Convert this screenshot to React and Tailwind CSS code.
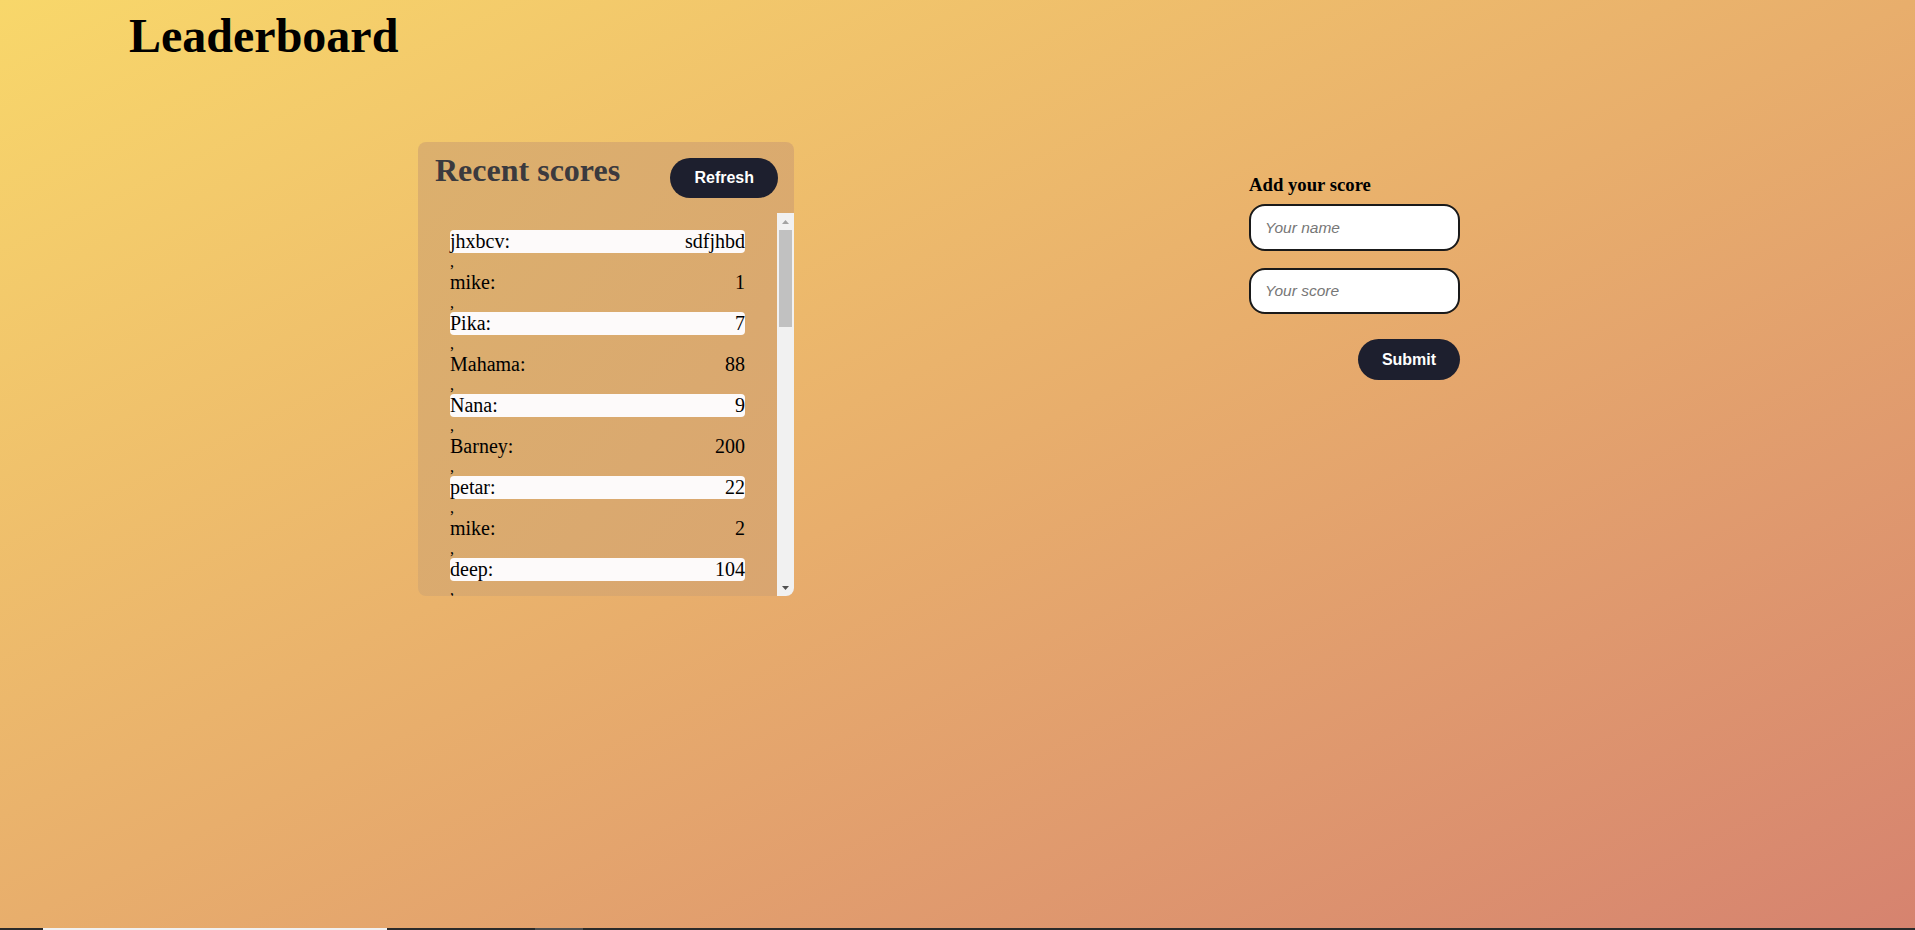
import React from 'react';

const scores = [
  { user: 'jhxbcv', score: 'sdfjhbd' },
  { user: 'mike', score: '1' },
  { user: 'Pika', score: '7' },
  { user: 'Mahama', score: '88' },
  { user: 'Nana', score: '9' },
  { user: 'Barney', score: '200' },
  { user: 'petar', score: '22' },
  { user: 'mike', score: '2' },
  { user: 'deep', score: '104' },
  { user: 'Kwame', score: '45' },
  { user: 'lisa', score: '12' },
  { user: 'Tom', score: '300' },
];

const serif = "font-['Liberation_Serif','Times_New_Roman',serif]";
const sans = "font-['Liberation_Sans',Arial,sans-serif]";

const Scrollbar = () => (
  <div className="w-[17px] shrink-0 bg-[#f1f1f1] flex flex-col">
    <div className="h-[17px] flex items-center justify-center">
      <svg width="7" height="4" viewBox="0 0 7 4">
        <path d="M0 4 L3.5 0 L7 4 Z" fill="#a3a3a3" />
      </svg>
    </div>
    <div className="mx-[2px] h-[97px] bg-[#c1c1c1]" />
    <div className="flex-1" />
    <div className="h-[17px] flex items-center justify-center">
      <svg width="7" height="4" viewBox="0 0 7 4">
        <path d="M0 0 L7 0 L3.5 4 Z" fill="#505050" />
      </svg>
    </div>
  </div>
);

const RecentScores = () => (
  <div className="w-[376px] h-[454px] shrink-0 rounded-lg bg-linear-to-br from-[#dcb06d] to-[#d9a570] flex flex-col overflow-hidden">
    <div className="flex justify-between items-start pl-[17px] pr-4 pt-[10px]">
      <h2 className={`${serif} text-[32px] font-bold leading-[normal] text-[#3b3a3e]`}>Recent scores</h2>
      <button className={`${sans} mt-[6px] h-[40px] px-6 rounded-full bg-[#1d1f2e] text-white text-base font-bold`}>
        Refresh
      </button>
    </div>
    <div className="mt-[15px] flex-1 min-h-0 flex">
      <div className={`${serif} flex-1 overflow-hidden px-8 pt-[17px] text-black`}>
        {scores.map((s, i) => (
          <div key={i}>
            <div
              className={`flex justify-between text-[20px] leading-[23px] rounded ${
                i % 2 === 0 ? 'bg-[#fdfafa]' : ''
              }`}
            >
              <span>{s.user}:</span>
              <span>{s.score}</span>
            </div>
            <div className="text-base leading-[18px]">,</div>
          </div>
        ))}
      </div>
      <Scrollbar />
    </div>
  </div>
);

const AddScore = () => (
  <form className="w-[211px] shrink-0 mt-[32px] flex flex-col" onSubmit={(e) => e.preventDefault()}>
    <h3 className={`${serif} text-[18.72px] font-bold leading-[normal] text-black`}>Add your score</h3>
    <input
      type="text"
      placeholder="Your name"
      className={`${sans} mt-2 h-[47px] w-full rounded-2xl border-2 border-[#1a1a1a] bg-white px-[14px] text-[15.5px] outline-none placeholder:italic placeholder:text-[#777777]`}
    />
    <input
      type="text"
      placeholder="Your score"
      className={`${sans} mt-[17px] h-[46px] w-full rounded-2xl border-2 border-[#1a1a1a] bg-white px-[14px] text-[15.5px] outline-none placeholder:italic placeholder:text-[#777777]`}
    />
    <button
      type="submit"
      className={`${sans} self-end mt-[25px] w-[102px] h-[41px] rounded-full bg-[#1d1f2e] text-white text-base font-bold`}
    >
      Submit
    </button>
  </form>
);

export default function App() {
  return (
    <div className="h-[930px] w-full flex flex-col overflow-hidden">
      <main className="flex-1 bg-linear-to-br from-[#f8d76a] via-[#e8ae6c] to-[#d6836f]">
        <h1 className={`${serif} pt-2 pl-[129px] text-[48px] font-bold leading-[normal] text-black`}>Leaderboard</h1>
        <div className="mt-[79px] flex items-start pl-[418px]">
          <RecentScores />
          <div className="w-[455px] shrink-0" />
          <AddScore />
        </div>
      </main>
      <div className="h-[2px] flex">
        <div className="w-[43px] bg-[#2b2b2b]" />
        <div className="w-[344px] bg-[#f1f1f1]" />
        <div className="w-[148px] bg-[#2b2b2b]" />
        <div className="w-[48px] bg-[#505050]" />
        <div className="flex-1 bg-[#2b2b2b]" />
      </div>
    </div>
  );
}
